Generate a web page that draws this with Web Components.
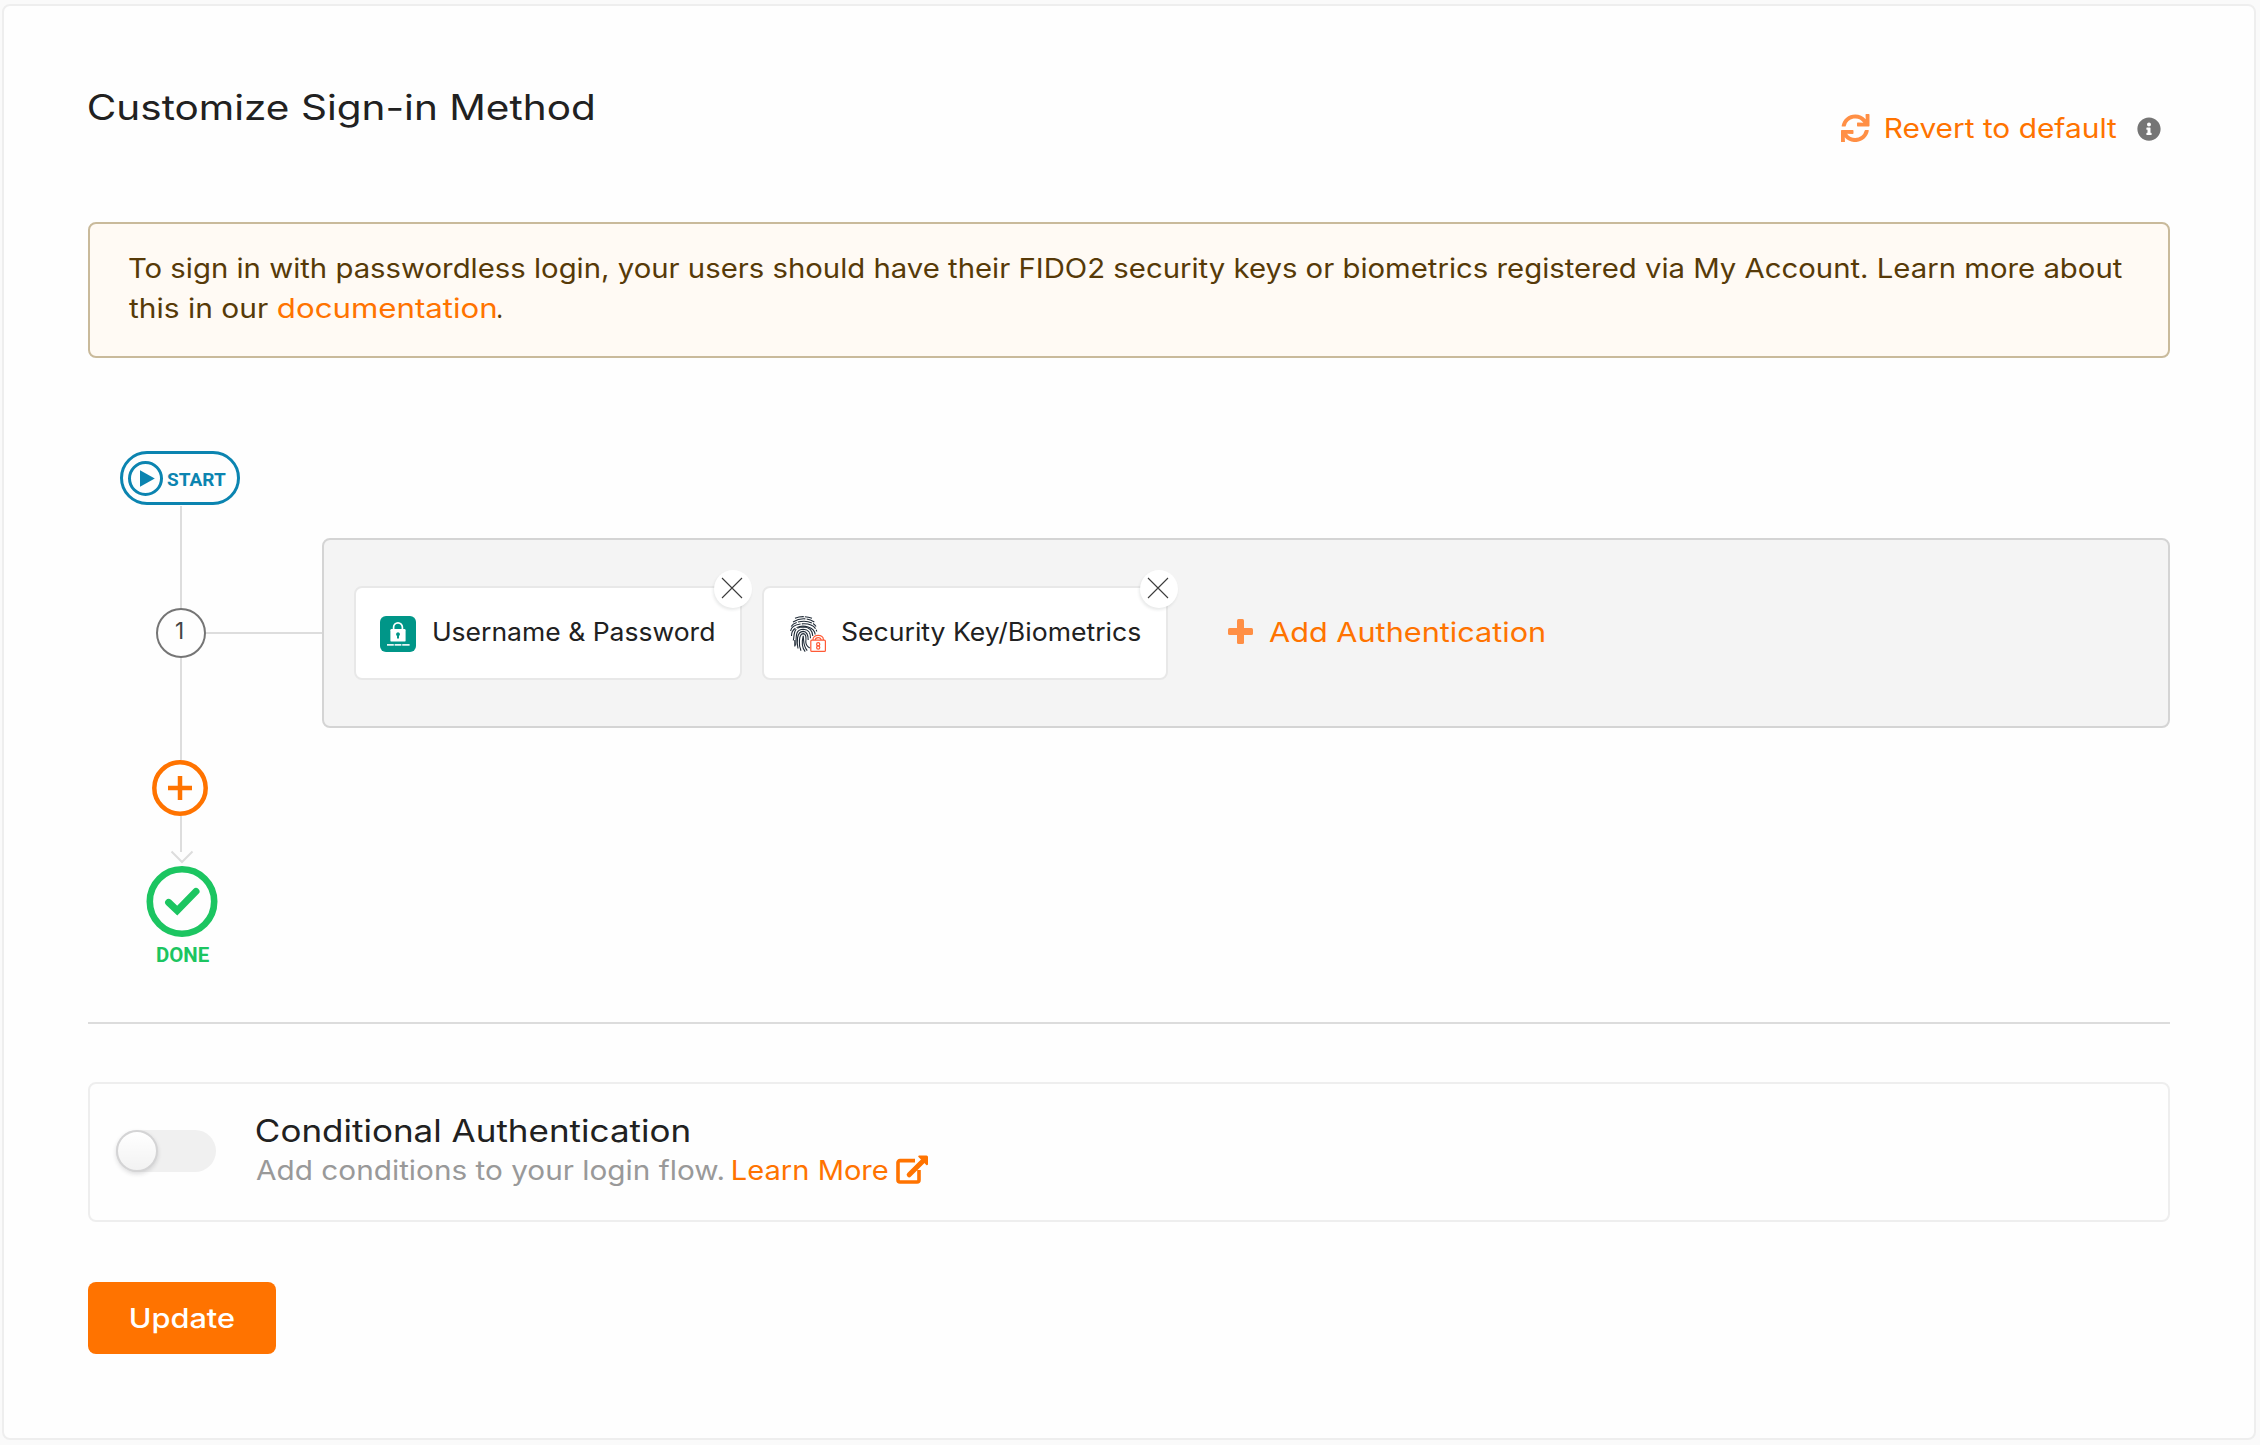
<!DOCTYPE html>
<html lang="en">
<head>
<meta charset="utf-8">
<title>Customize Sign-in Method</title>
<style>
html,body{margin:0;height:100%}
body{background:#fafafa;font-family:Inter,"Open Sans",sans-serif;color:#212121;overflow:hidden}
</style>
</head>
<body>
<signin-page></signin-page>
<script>
const pen = document.createElement('canvas').getContext('2d');

function define(name, html, setup) {
  const tpl = document.createElement('template');
  tpl.innerHTML = html;
  customElements.define(name, class extends HTMLElement {
    constructor() {
      super();
      this.attachShadow({ mode: 'open' }).append(tpl.content.cloneNode(true));
    }
    connectedCallback() { if (setup) setup(this, this.shadowRoot); }
  });
}

/* One line of wide-set text: its ink fills exactly the width in pixels given by "w". */
define('wide-text', `<style>
:host{display:block;flex:none;line-height:40px;height:40px}
span{display:block;width:max-content;transform-origin:0 50%;white-space:pre}
</style><span></span>`, (el, root) => {
  const span = root.querySelector('span');
  const size = +el.getAttribute('size'), w = +el.getAttribute('w');
  const weight = el.getAttribute('weight') || 400;
  const family = el.getAttribute('family') || 'Inter';
  const text = el.getAttribute('text');
  const drop = family === 'Inter' ? 1 : 0;
  span.textContent = text;
  span.style.font = weight + ' ' + size + 'px/40px "' + family + '", sans-serif';
  pen.font = weight + ' ' + size + 'px "' + family + '"';
  const m = pen.measureText(text);
  const k = w / (m.actualBoundingBoxLeft + m.actualBoundingBoxRight);
  span.style.transform = 'translate(' + (m.actualBoundingBoxLeft * k) + 'px,' + drop + 'px) scaleX(' + k + ')';
  el.style.width = w + 'px';
});

define('refresh-icon', `<style>:host{display:block;flex:none}svg{display:block}</style>
<svg width="28.5" height="28.5" viewBox="0 0 512 512" fill="#ff8f45"><path d="M440.65 12.57l4 82.77A247.16 247.16 0 0 0 255.83 8C134.73 8 33.91 94.92 12.29 209.82A12 12 0 0 0 24.09 224h49.05a12 12 0 0 0 11.67-9.26 175.91 175.91 0 0 1 317-56.94l-101.46-4.86a12 12 0 0 0-12.57 12v47.41a12 12 0 0 0 12 12H500a12 12 0 0 0 12-12V12a12 12 0 0 0-12-12h-47.37a12 12 0 0 0-11.98 12.57zM255.83 432a175.61 175.61 0 0 1-146-77.8l101.8 4.87a12 12 0 0 0 12.57-12v-47.4a12 12 0 0 0-12-12H12a12 12 0 0 0-12 12V500a12 12 0 0 0 12 12h47.35a12 12 0 0 0 12-12.6l-4.15-82.57A247.17 247.17 0 0 0 255.83 504c121.11 0 221.93-86.92 243.55-201.82a12 12 0 0 0-11.8-14.18h-49.05a12 12 0 0 0-11.67 9.26A175.86 175.86 0 0 1 255.83 432z"/></svg>`);

define('info-icon', `<style>:host{display:block;flex:none}svg{display:block}</style>
<svg width="24" height="24" viewBox="0 0 512 512" fill="#757575"><path d="M256 8C119.043 8 8 119.083 8 256c0 136.997 111.043 248 248 248s248-111.003 248-248C504 119.083 392.957 8 256 8zm0 110c23.196 0 42 18.804 42 42s-18.804 42-42 42-42-18.804-42-42 18.804-42 42-42zm56 254c0 6.627-5.373 12-12 12h-88c-6.627 0-12-5.373-12-12v-24c0-6.627 5.373-12 12-12h12v-64h-12c-6.627 0-12-5.373-12-12v-24c0-6.627 5.373-12 12-12h64c6.627 0 12 5.373 12 12v100h12c6.627 0 12 5.373 12 12v24z"/></svg>`);

define('page-header', `
<style>
:host{display:flex;justify-content:space-between;height:136px}
.title{padding-left:.5px}
.revert{display:flex;align-items:center;height:40px;margin:22px 9px 0 0;color:#ff7300}
.revert wide-text{margin:0 20px 0 16.5px}
info-icon{margin-top:2px}
</style>
<div class="title"><wide-text text="Customize Sign-in Method" size="35" w="504"></wide-text></div>
<div class="revert"><refresh-icon></refresh-icon><wide-text text="Revert to default" size="27" w="231"></wide-text><info-icon></info-icon></div>`);

define('notice-box', `
<style>
:host{display:block;box-sizing:border-box;height:136px;border:2px solid #c9ba9b;border-radius:8px;background:#fffaf4;color:#573a08;padding:24px 39px}
.line{display:flex}
.link{color:#ff7300;margin:0 2.5px 0 10px}
</style>
<div class="line"><wide-text text="To sign in with passwordless login, your users should have their FIDO2 security keys or biometrics registered via My Account. Learn more about" size="27" w="1993.5"></wide-text></div>
<div class="line"><wide-text text="this in our" size="27" w="139"></wide-text><wide-text class="link" text="documentation" size="27" w="217.5"></wide-text><wide-text text="." size="27" w="3.5"></wide-text></div>`);

define('start-pill', `
<style>
:host{display:flex;align-items:center;box-sizing:border-box;width:120px;height:54px;border:3px solid #0b84b0;border-radius:27px;color:#0b84b0;padding-left:5px}
svg{display:block}wide-text{margin:3px 0 0 4px}
</style>
<svg width="35" height="35" viewBox="0 0 35 35"><circle cx="17.5" cy="17.5" r="16" fill="none" stroke="#0b84b0" stroke-width="3"/><path d="M12 9.2v16.6l14.8-8.3z" fill="#0b84b0"/></svg>
<wide-text text="START" family="Roboto" weight="700" size="18" w="58.5"></wide-text>`);

define('auth-tile', `
<style>
:host{display:flex;align-items:center;position:relative;box-sizing:border-box;height:94px;border:2px solid #e8e8e8;border-radius:8px;background:#fff;padding-left:24px}
slot{display:flex;align-items:center}
::slotted(wide-text){margin-top:-4px;margin-left:18px}
.close{position:absolute;right:-12px;top:-18px;width:38px;height:38px;border-radius:50%;background:#fff;box-shadow:-1px 2px 3px rgba(34,36,38,.1)}
.close svg{display:block}
</style>
<slot></slot>
<div class="close"><svg width="38" height="38" viewBox="0 0 38 38"><path d="M8 8l20 20M28 8L8 28" stroke="#3c3c3c" stroke-width="1.1"/></svg></div>`);

define('password-icon', `<style>:host{display:block;flex:none;margin-top:2px}svg{display:block}</style>
<svg width="36" height="36" viewBox="0 0 36 36"><rect width="36" height="36" rx="6" fill="#009688"/>
<path d="M13.6 13.5v-2.2a4.4 4.4 0 0 1 8.8 0v2.2" fill="none" stroke="#fff" stroke-width="1.7"/>
<rect x="10.4" y="13" width="15.2" height="12.6" rx="1.2" fill="#fff"/>
<path d="M18 16.2a2 2 0 0 1 1 3.7v2.6h-2v-2.6a2 2 0 0 1 1-3.7z" fill="#009688"/>
<path d="M7 28.8h6.8M14.6 28.8h6.8M22.2 28.8H29.6" stroke="#e6f4f3" stroke-width="1.7"/></svg>`);

define('biometric-icon', `<style>:host{display:block;flex:none;margin-top:2px}svg{display:block}</style>
<svg width="36" height="36" viewBox="0 0 36 36"><g fill="none" stroke="#1f2a36" stroke-width="1.1">
<path d="M5 2.2Q13 -.9 22 2.3" stroke-dasharray="9 1 12 1"/>
<path d="M3 6Q13.5 -.5 24.3 6" stroke-dasharray="13 1.3 9 1.2"/>
<path d="M1.2 10.5C5 3.8 22 3.4 26 10.5" stroke-dasharray="7 1.3 14 1.3"/>
<path d="M.6 15C1.8 5.5 25 5.2 26.7 15.5" stroke-dasharray="13 1.3 15 1.3"/>
<path d="M1.500 20C1 6.8 24.200 7.5 25.2 18.5" stroke-dasharray="9 1.3 30"/>
<path d="M3.3 24.5C4.8 18 2.5 11.2 13.2 11c8 .2 9.4 5 9.6 9" stroke-dasharray="12 1.3 30"/>
<path d="M5.6 29.5C7 22 4 13.4 13.3 13.2c6.2.2 7.2 4 7.2 9"/>
<path d="M8 32.5C6.8 27 6.2 15.5 13.2 15.4c4.2.2 5 3.6 5 8.7"/>
<path d="M11 34.8C8.6 30 8.4 17.7 13.2 17.6c3 .2 3 4 2.6 8.4.2 3 2 5 4 6"/>
<path d="M15.2 35.6c-3.6-4-3.4-10-2-15.7.8 5-.4 9.3 4 14.7"/>
<path d="M4.8 24v6.5"/></g>
<g fill="none" stroke="#ff5a36" stroke-width="1.2"><rect x="20.8" y="24.2" width="14.6" height="11.2" rx="1" fill="#fff"/>
<path d="M23 24v-.5a5.200 4.200 0 0 1 10.4 0v.5M25.4 24v-.2a2.8 2.2 0 0 1 5.6 0v.2"/><circle cx="28.2" cy="28.3" r="1.6"/><circle cx="28.2" cy="31.500" r="1.6"/></g></svg>`);

define('auth-panel', `
<style>
:host{display:flex;align-items:center;gap:20px;flex:1;box-sizing:border-box;height:190px;border:2px solid #d4d4d4;border-radius:8px;background:#f4f4f4;padding-left:30px}
.one{width:388px}.two{width:406px}
.two biometric-icon{margin-left:2px}
.two wide-text{margin-left:16px}
.add{display:flex;align-items:center;color:#ff7300;margin-left:40px}
.add svg{display:block;margin-top:-3px}
.add wide-text{margin-left:16px;margin-top:-2px}
.one,.two{color:#212121}
</style>
<auth-tile class="one"><password-icon></password-icon><wide-text text="Username &amp; Password" size="25" w="280"></wide-text></auth-tile>
<auth-tile class="two"><biometric-icon></biometric-icon><wide-text text="Security Key/Biometrics" size="25" w="298"></wide-text></auth-tile>
<div class="add"><svg width="25" height="25" viewBox="0 0 25 25" fill="#ff8f45"><rect x="9" width="7" height="25" rx="1.5"/><rect y="9" width="25" height="7" rx="1.5"/></svg><wide-text text="Add Authentication" size="27" w="275"></wide-text></div>`);

define('auth-flow', `
<style>
:host{display:block;margin-top:93px;height:571px;box-sizing:border-box}
start-pill{margin-left:32px}
.v{width:2px;background:#ddd;margin-left:92px}
.step{display:flex;align-items:center;height:190px}
.rail{display:flex;flex-direction:column;align-items:center;margin-left:68px;width:50px}
.rail i{width:2px;height:70px;background:#ddd}
.num{box-sizing:border-box;width:50px;height:50px;border:2px solid #757575;border-radius:50%;color:#444;display:flex;justify-content:center;padding-right:3px}
.h{width:116px;height:2px;background:#ddd}
svg{display:block}
.plus{margin-left:64px}.arrow{margin-left:82px}.done{margin-left:58px}
.label{color:#1cc561;margin:-3px 0 0 69px}
</style>
<start-pill></start-pill>
<div class="v" style="height:32px;margin-top:1px"></div>
<div class="step"><div class="rail"><i></i><div class="num"><wide-text text="1" size="22.5" w="7"></wide-text></div><i></i></div><div class="h"></div><auth-panel></auth-panel></div>
<div class="v" style="height:32px"></div>
<svg class="plus" width="56" height="56" viewBox="0 0 56 56" fill="none" stroke="#ff7300" stroke-width="4.5"><circle cx="28" cy="28" r="25.7"/><path d="M16 28h24M28 16v24"/></svg>
<div class="v" style="height:34px"></div>
<svg class="arrow" width="24" height="16" viewBox="0 0 24 16"><path d="M11 0v2" stroke="#ddd" stroke-width="2"/><path d="M1.5 1.5L12 12 22.5 1.5" fill="none" stroke="#ddd" stroke-width="2"/></svg>
<svg class="done" width="72" height="72" viewBox="0 0 72 72" fill="none" stroke="#1cc561"><circle cx="36" cy="35.5" r="32.2" stroke-width="6.6"/><path d="M22.6 36.4L31.2 44.6 50 25.4" stroke-width="7" stroke-linecap="round"/></svg>
<wide-text class="label" text="DONE" family="Roboto" weight="700" size="20" w="52"></wide-text>`);

define('toggle-switch', `
<style>
:host{display:block;flex:none;width:100px;height:42px;border-radius:21px;background:#f0f0f0}
i{display:block;box-sizing:border-box;width:42px;height:42px;border-radius:50%;border:2px solid #d4d4d5;background:#fff linear-gradient(transparent,rgba(0,0,0,.05));background-clip:padding-box;box-shadow:0 2px 4px rgba(34,36,38,.15)}
</style><i></i>`);

define('condition-box', `
<style>
:host{display:flex;box-sizing:border-box;height:140px;border:2px solid #eee;border-radius:8px;margin-top:58px;padding:0 26px}
toggle-switch{margin-top:46px}
.text{margin:26px 0 0 39.5px}
.sub{display:flex;align-items:flex-start;color:#999}
.link{color:#ff7300;margin:0 8px 0 10px}
svg{display:block;margin-top:5px}
</style>
<toggle-switch></toggle-switch>
<div class="text"><wide-text text="Conditional Authentication" size="31" w="432.5"></wide-text>
<div class="sub"><wide-text text="Add conditions to your login flow." size="27" w="467"></wide-text><wide-text class="link" text="Learn More" size="27" w="155"></wide-text>
<svg width="33" height="30" viewBox="0 0 33 30"><path d="M19 5.6H4a2 2 0 0 0-2 2V25a2 2 0 0 0 2 2H21a2 2 0 0 0 2-2V15" fill="none" stroke="#ff7300" stroke-width="3.6"/><path d="M13.2 19.8L27 6" stroke="#ff7300" stroke-width="5" stroke-linecap="round"/><path d="M23.2.4H30.5a1.5 1.5 0 0 1 1.5 1.5V9.2a1 1 0 0 1-1.7.7L22.5 2.1a1 1 0 0 1 .7-1.7z" fill="#ff7300"/></svg></div></div>`);

define('update-button', `
<style>
:host{display:flex;justify-content:center;align-items:center;width:188px;height:72px;border-radius:8px;background:#ff7300;color:#fff;margin-top:60px}
</style><wide-text text="Update" size="27" weight="500" w="103"></wide-text>`);

define('signin-page', `
<style>
:host{display:block;box-sizing:border-box;padding:4px 4px 5px 2px;height:1445px}
main{box-sizing:border-box;height:1436px;border:2px solid #eee;border-radius:8px;background:#fefefe;padding:80px 84px 0}
hr{border:0;height:2px;background:#dcdcdc;margin:0}
</style>
<main><page-header></page-header><notice-box></notice-box><auth-flow></auth-flow><hr><condition-box></condition-box><update-button></update-button></main>`);
</script>
</body>
</html>
